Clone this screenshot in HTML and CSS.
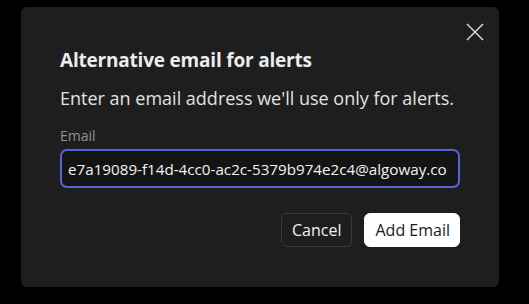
FILE: index.html
```html
<!DOCTYPE html>
<html lang="en">
<head>
    <meta charset="UTF-8">
    <title>Alternative email for alerts</title>
    <link rel="stylesheet" href="styles.css">
</head>
<body>
    <div class="dialog">
        <button class="close" aria-label="Close">
            <svg width="18" height="18" viewBox="0 0 18 18">
                <path d="M1 1 L17 17 M17 1 L1 17" stroke="#d8d8d8" stroke-width="1.5" fill="none"/>
            </svg>
        </button>
        <h2 class="title">Alternative email for alerts</h2>
        <p class="desc">Enter an email address we'll use only for alerts.</p>
        <label class="label" for="email">Email</label>
        <input id="email" class="input" type="text" value="e7a19089-f14d-4cc0-ac2c-5379b974e2c4@algoway.co">
        <div class="actions">
            <button class="btn btn-cancel">Cancel</button>
            <button class="btn btn-add">Add Email</button>
        </div>
    </div>
</body>
</html>
```

FILE: styles.css
```css
body {
    margin: 0;
    background: #000;
    font-family: "Open Sans", sans-serif;
    width: 529px;
    height: 304px;
    overflow: hidden;
}
.dialog {
    position: relative;
    margin: 7px 0 0 21px;
    width: 478px;
    height: 280px;
    box-sizing: border-box;
    background: #1e1e1e;
    border-radius: 6px;
    padding: 40px 39px 0 39px;
}
.close {
    position: absolute;
    top: 16px;
    right: 15px;
    background: none;
    border: none;
    padding: 0;
    cursor: pointer;
}
.close svg {
    display: block;
}
.title {
    margin: 0;
    color: #ececec;
    font-size: 19px;
    font-weight: 700;
    line-height: 26px;
    letter-spacing: -0.2px;
}
.desc {
    margin: 13px 0 0;
    color: #e2e2e2;
    font-size: 18px;
    line-height: 24px;
}
.label {
    display: block;
    margin-top: 17px;
    color: #929292;
    font-size: 14px;
    line-height: 18px;
}
.input {
    display: block;
    margin-top: 4px;
    width: 400px;
    height: 39px;
    box-sizing: border-box;
    background: #141414;
    border: 2px solid #5a63d6;
    border-radius: 7px;
    color: #f2f2f2;
    font-family: "Open Sans", sans-serif;
    font-size: 15.2px;
    padding: 0 6px;
    outline: none;
}
.actions {
    display: flex;
    justify-content: flex-end;
    gap: 12px;
    margin-top: 25px;
}
.btn {
    height: 34px;
    border-radius: 6px;
    font-family: "Open Sans", sans-serif;
    font-size: 16px;
    padding: 0 10px;
    cursor: pointer;
}
.btn-cancel {
    background: #1e1e1e;
    border: 1px solid #3a3a3a;
    color: #f0f0f0;
}
.btn-add {
    background: #fff;
    border: 1px solid #fff;
    color: #1a1a1a;
    padding: 0 9px 0 10px;
}
```
